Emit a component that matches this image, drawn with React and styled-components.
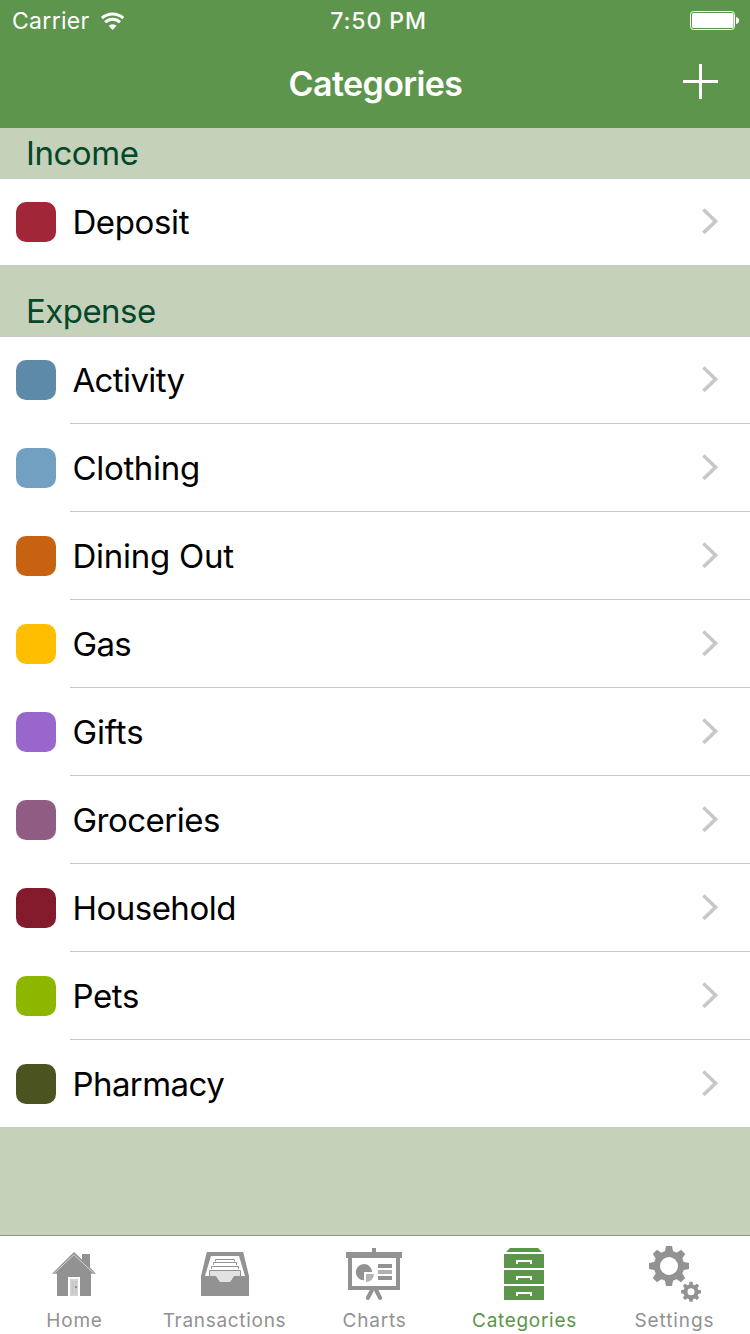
import styled, { createGlobalStyle } from 'styled-components';

const GlobalStyle = createGlobalStyle`
  * {
    box-sizing: border-box;
  }
  body {
    margin: 0;
    background: #c5d1b9;
    font-family: Inter, "Liberation Sans", sans-serif;
    -webkit-font-smoothing: antialiased;
  }
`;

const Screen = styled.div`
  display: flex;
  flex-direction: column;
  width: 750px;
  height: 1334px;
  overflow: hidden;
  background: #c5d1b9;
`;

const Header = styled.header`
  height: 128px;
  flex: none;
  background: #5c954b;
  color: #fff;
`;

const StatusBar = styled.div`
  display: grid;
  grid-template-columns: 1fr auto 1fr;
  align-items: center;
  height: 40px;
  padding: 2px 11px 0 12px;
  line-height: 38px;
`;

const Carrier = styled.div`
  display: flex;
  align-items: center;
  gap: 10px;
  font-size: 23px;
  font-weight: 400;
  letter-spacing: ${(props) => props.$spacing || 0}px;
  svg {
    display: block;
  }
`;

const Clock = styled.div`
  font-size: 23px;
  font-weight: 500;
  letter-spacing: 0.9px;
  padding-left: 6px;
`;

const Battery = styled.svg`
  display: block;
  justify-self: end;
`;

const NavBar = styled.div`
  display: grid;
  grid-template-columns: 1fr auto 1fr;
  height: 88px;
  padding-right: 32px;
`;

const NavTitle = styled.h1`
  grid-column: 2;
  margin: 0;
  padding-left: 33px;
  font-size: 34px;
  font-weight: 600;
  line-height: 88px;
  letter-spacing: -0.6px;
`;

const AddButton = styled.button`
  justify-self: end;
  align-self: start;
  margin: 24px 0 0;
  padding: 0;
  border: 0;
  background: none;
  svg {
    display: block;
  }
`;

const Sections = styled.main`
  flex: 1;
  min-height: 0;
`;

const SectionTitle = styled.h2`
  display: flex;
  align-items: flex-end;
  height: ${(props) => props.$height}px;
  margin: 0;
  padding: 0 0 5px 26px;
  color: #04472a;
  font-size: 33px;
  font-weight: 400;
  line-height: 40px;
  letter-spacing: ${(props) => props.$spacing || 0}px;
`;

const List = styled.ul`
  margin: 0;
  padding: 0;
  list-style: none;
  background: #fff;
  border-top: 1px solid #c8c7cc;
  border-bottom: 1px solid #c8c7cc;
`;

const Row = styled.li`
  display: flex;
  align-items: center;
  height: 88px;
  padding-left: 16px;
  &:first-child {
    height: 87px;
  }
  &:last-child {
    height: 87px;
  }
  &:only-child {
    height: 86px;
  }
`;

const Swatch = styled.span`
  flex: none;
  width: 40px;
  height: 40px;
  border-radius: 10px;
  background: ${(props) => props.$color};
  ${Row}:first-child:not(:only-child) & {
    margin-bottom: 1px;
  }
`;

const RowBody = styled.div`
  display: flex;
  flex: 1;
  align-items: center;
  justify-content: space-between;
  height: 100%;
  margin-left: 14px;
  padding: 0 31.5px 0 2.4px;
  border-bottom: 1px solid #c8c7cc;
  ${Row}:last-child & {
    border-bottom: 0;
  }
`;

const RowLabel = styled.span`
  color: #000;
  font-size: 33px;
  line-height: 40px;
  letter-spacing: ${(props) => props.$spacing || 0}px;
`;

const TabBar = styled.nav`
  display: grid;
  grid-template-columns: repeat(5, 1fr);
  flex: none;
  height: 99px;
  background: #fff;
  border-top: 1px solid #929292;
`;

const Tab = styled.a`
  display: flex;
  flex-direction: column;
  align-items: center;
  padding-top: 4px;
  color: ${(props) => (props.$active ? '#5c954b' : '#929292')};
  svg {
    display: block;
    fill: currentColor;
  }
`;

const TabLabel = styled.span`
  margin-top: 5px;
  padding-right: 1px;
  font-size: 19px;
  line-height: 28px;
  letter-spacing: ${(props) => props.$spacing || 0}px;
`;

const income = [{ name: 'Deposit', color: '#a12638', spacing: -0.35 }];

const expenses = [
  { name: 'Activity', color: '#5e8aa9', spacing: -0.6 },
  { name: 'Clothing', color: '#72a0c1', spacing: -0.3 },
  { name: 'Dining Out', color: '#c66210', spacing: -0.25 },
  { name: 'Gas', color: '#ffbf00', spacing: -0.6 },
  { name: 'Gifts', color: '#9966cc', spacing: -0.1 },
  { name: 'Groceries', color: '#915c83', spacing: -0.5 },
  { name: 'Household', color: '#841b2d', spacing: -0.5 },
  { name: 'Pets', color: '#8db600', spacing: -0.35 },
  { name: 'Pharmacy', color: '#4b5320', spacing: -0.55 },
];

const WifiIcon = () => (
  <svg width="26" height="20" viewBox="0 0 26 20" fill="none" stroke="#fff" strokeWidth="3">
    <path d="M1.9 7.2A15.9 15.9 0 0 1 23.3 7.2" />
    <path d="M5.2 11.2A10.5 10.5 0 0 1 20 11.2" />
    <path d="M12.6 19L8.6 14.7A6 6 0 0 1 16.6 14.7Z" fill="#fff" stroke="none" />
  </svg>
);

const Chevron = () => (
  <svg width="18" height="28" viewBox="0 0 18 28" fill="none" stroke="#c7c7cc" strokeWidth="3.6">
    <path d="M2.4 1.5L14.6 13.2L2.4 24.9" />
  </svg>
);

const HomeIcon = () => (
  <svg width="60" height="62" viewBox="0 0 60 62">
    <path d="M29 12L37 19.5V14H45V27.5L51 33.7H46V56H12V33.7H7Z" />
    <path d="M9 33.5L29 14.7L49 33.5" fill="none" stroke="#dcdcdc" strokeWidth="0.9" />
    <path d="M23 37H35V56H23Z" fill="#fff" />
    <path d="M25 39H33V56H25Z" fill="#d2d2d2" />
    <path d="M26.5 41H28.5V54H26.5ZM30 41H31.5V54H30Z" fill="#c6c6c6" />
    <path d="M30 46H32V48H30Z" />
  </svg>
);

const TransactionsIcon = () => (
  <svg width="60" height="62" viewBox="0 0 60 62">
    <path d="M11.8 12H48.2L54 36V56H6V36Z" />
    <path d="M16 16H44L50 36H10Z" fill="#fff" />
    <g fill="none" stroke="#929292" strokeWidth="1">
      <path d="M20.5 21.5V19.5H39.5V21.5" />
      <path d="M18.5 25V22.5H41.5V25" />
      <path d="M16.5 29V26.5H43.5V29" />
      <path d="M14.5 37V30.5H45.5V37" fill="#e2e2e2" />
    </g>
    <path d="M20 36H40L35 42H25Z" fill="#e2e2e2" />
    <path d="M6 36H20C23 36 22.5 42 25.5 42H34.5C37.5 42 37 36 40 36H54V56H6Z" />
  </svg>
);

const ChartsIcon = () => (
  <svg width="60" height="62" viewBox="0 0 60 62">
    <path d="M27 8H31V12H57V18H55V50H3V18H1V12H27Z" />
    <path d="M7 18H51V46H7Z" fill="#fff" />
    <path d="M19 32V40.2A8.1 8.1 0 1 1 27 32Z" />
    <path d="M21 34H29A8 8 0 0 1 21 42Z" fill="#b4b4b4" />
    <path d="M33 24H47V28H33ZM33 36H47V40H33Z" />
    <path d="M33 30H47V34H33Z" fill="#b0b0b0" />
    <path d="M27 50L22.8 58M31 50L35.2 58" stroke="currentColor" strokeWidth="4" strokeLinecap="round" />
  </svg>
);

const CategoriesIcon = () => (
  <svg width="60" height="62" viewBox="0 0 60 62">
    <path d="M15 8H43L47 12H11Z" />
    {[14, 30, 46].map((y) => (
      <g key={y} transform={`translate(9 ${y})`}>
        <path d="M0 0H40V14H0Z" />
        <path d="M12 6H28V10H26V8H14V10H12Z" fill="#fff" />
      </g>
    ))}
  </svg>
);

// one cog on a 40 unit box around the origin, eight teeth
const Cog = ({ x, y, scale, hole }) => (
  <g transform={`translate(${x} ${y}) scale(${scale})`}>
    <circle r={(15.2 + hole) / 2} fill="none" stroke="currentColor" strokeWidth={15.2 - hole} />
    {[0, 45, 90, 135, 180, 225, 270, 315].map((angle) => (
      <path key={angle} d="M-3 -20H3L4.2 -14H-4.2Z" transform={`rotate(${angle})`} />
    ))}
  </g>
);

const SettingsIcon = () => (
  <svg width="60" height="62" viewBox="0 0 60 62">
    <Cog x={24} y={26} scale={1} hole={9} />
    <Cog x={46} y={51.8} scale={0.5} hole={7} />
  </svg>
);

const tabs = [
  { name: 'Home', Icon: HomeIcon, spacing: 0.8 },
  { name: 'Transactions', Icon: TransactionsIcon, spacing: 0.7 },
  { name: 'Charts', Icon: ChartsIcon, spacing: 0.8 },
  { name: 'Categories', Icon: CategoriesIcon, spacing: 0.7, active: true },
  { name: 'Settings', Icon: SettingsIcon, spacing: 0.9 },
];

const CategoryList = ({ items }) => (
  <List>
    {items.map((item) => (
      <Row key={item.name}>
        <Swatch $color={item.color} />
        <RowBody>
          <RowLabel $spacing={item.spacing}>{item.name}</RowLabel>
          <Chevron />
        </RowBody>
      </Row>
    ))}
  </List>
);

export default function App() {
  return (
    <Screen>
      <GlobalStyle />
      <Header>
        <StatusBar>
          <Carrier $spacing={0.3}>
            Carrier
            <WifiIcon />
          </Carrier>
          <Clock>7:50 PM</Clock>
          <Battery width="49" height="20" viewBox="0 0 49 20">
            <rect x="0.5" y="0.5" width="44" height="18" rx="3" fill="none" stroke="#fff" />
            <rect x="2" y="2" width="41.5" height="15" rx="1.5" fill="#fff" />
            <path d="M46 6C48 6.4 49 7.6 49 9.5S48 12.6 46 13Z" fill="#fff" />
          </Battery>
        </StatusBar>
        <NavBar>
          <NavTitle>Categories</NavTitle>
          <AddButton aria-label="Add category">
            <svg width="35" height="35" viewBox="0 0 35 35">
              <path d="M16 0H19V16H35V19H19V35H16V19H0V16H16Z" fill="#fff" />
            </svg>
          </AddButton>
        </NavBar>
      </Header>
      <Sections>
        <SectionTitle $height={50} $spacing={-0.45}>Income</SectionTitle>
        <CategoryList items={income} />
        <SectionTitle $height={70} $spacing={-0.55}>Expense</SectionTitle>
        <CategoryList items={expenses} />
      </Sections>
      <TabBar>
        {tabs.map(({ name, Icon, spacing, active }) => (
          <Tab key={name} $active={active}>
            <Icon />
            <TabLabel $spacing={spacing}>{name}</TabLabel>
          </Tab>
        ))}
      </TabBar>
    </Screen>
  );
}
